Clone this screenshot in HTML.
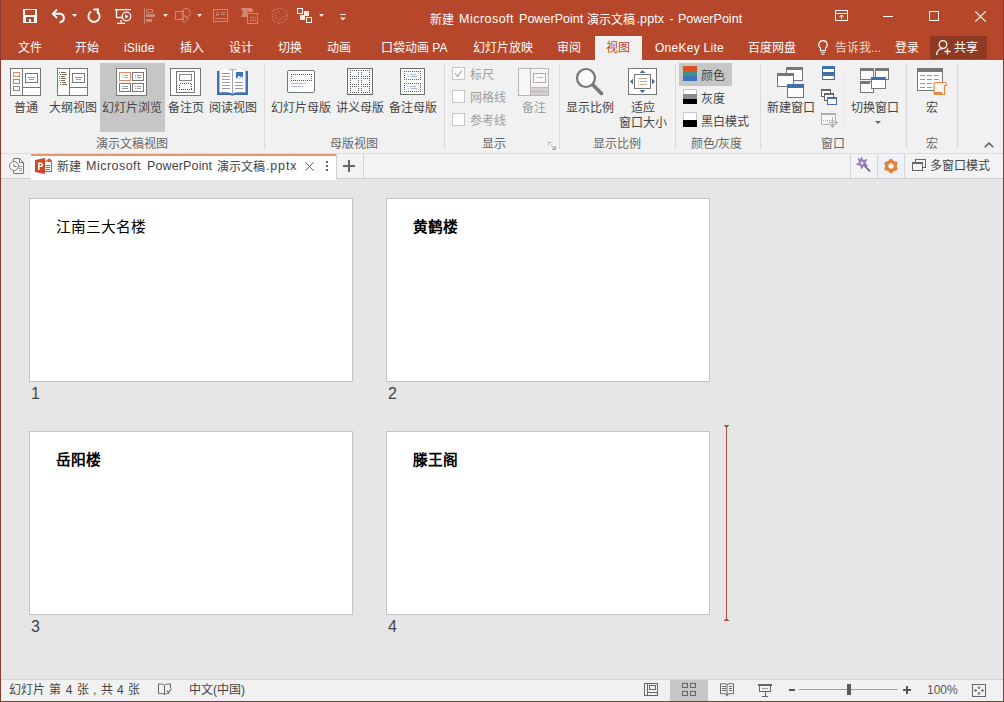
<!DOCTYPE html>
<html lang="zh-CN">
<head>
<meta charset="utf-8">
<title>PowerPoint</title>
<style>
*{box-sizing:border-box;margin:0;padding:0}
html,body{width:1004px;height:702px;overflow:hidden;background:#e6e6e6}
body{font-family:"Liberation Sans",sans-serif;font-size:12px;color:#444;position:relative}
.abs,.abs *{position:absolute}
.abs{left:0;top:0;width:1004px;height:702px}
.t{white-space:nowrap;line-height:14px;height:14px}
svg{position:absolute;overflow:visible}
/* header */
#hdr{left:0;top:0;width:1004px;height:60px;background:#b7472a}
#hdr .t{color:#fff}
.menu{top:41px;font-size:12px}
#title{top:11px;left:430px;font-size:13px;line-height:16px;height:16px;color:#fff}
#vtab{left:595px;top:36px;width:47px;height:24px;background:#f1f1f1}
#share{left:930px;top:36px;width:57px;height:23px;background:#8e3a22}
/* ribbon */
#rib{left:1px;top:60px;width:1002px;height:93px;background:#f1f1f1}
.sep{width:1px;background:#dadada;top:64px;height:85px}
.lbl{font-size:12px;color:#444}
.glbl{font-size:12px;color:#666;top:137px}
.sel{background:#c6c6c6}
.cb{width:13px;height:13px;border:1px solid #c8c8c8;background:#fdfdfd}
.dis{color:#9e9e9e}
/* doc tabs */
#tabs{left:1px;top:153px;width:1002px;height:26px;background:#f3f3f3;border-top:1px solid #dcdcdc;border-bottom:1px solid #d0d0d0}
#dtab{left:31px;top:154px;width:305px;height:26px;background:#fff;border-top:2px solid #e8946e}
.tsep{width:1px;background:#d4d4d4;top:154px;height:24px}
/* slides */
.slide{width:324px;height:184px;background:#fff;border:1px solid #c4c4c4}
.stxt{font-size:14.67px;line-height:18px;height:18px;color:#000;white-space:nowrap}
.num{font-size:16px;line-height:16px;height:16px;color:#444}
/* status */
#stat{left:1px;top:679px;width:1002px;height:22px;background:#f1f1f1;border-top:1px solid #d4d4d4}
.edge{background:#8a3a30}
</style>
</head>
<body>
<div class="abs">

<!-- ===== HEADER ===== -->
<div id="hdr"></div>
<div id="vtab"></div>
<div id="share"></div>
<div class="t" style="left:430px;top:13px;font-size:12px;letter-spacing:0px;color:#fff">新建</div>
<div class="t" style="left:459px;top:12px;font-size:12.5px;letter-spacing:0.48px;color:#fff">Microsoft</div>
<div class="t" style="left:519px;top:12px;font-size:12.5px;letter-spacing:0.04px;color:#fff">PowerPoint</div>
<div class="t" style="left:587px;top:13px;font-size:12px;letter-spacing:0px;color:#fff">演示文稿</div>
<div class="t" style="left:636.5px;top:12px;font-size:12.5px;letter-spacing:0.12px;color:#fff">.pptx</div>
<div class="t" style="left:669.5px;top:12px;font-size:12.5px;letter-spacing:0px;color:#fff">-</div>
<div class="t" style="left:678px;top:12px;font-size:12.5px;letter-spacing:0.02px;color:#fff">PowerPoint</div>

<div class="t menu" style="left:18px;color:#fff">文件</div>
<div class="t menu" style="left:75px;color:#fff">开始</div>
<div class="t menu" style="left:124px;color:#fff;letter-spacing:0.2px">iSlide</div>
<div class="t menu" style="left:180px;color:#fff">插入</div>
<div class="t menu" style="left:229px;color:#fff">设计</div>
<div class="t menu" style="left:278px;color:#fff">切换</div>
<div class="t menu" style="left:327px;color:#fff">动画</div>
<div class="t menu" style="left:381px;color:#fff">口袋动画 PA</div>
<div class="t menu" style="left:473px;color:#fff">幻灯片放映</div>
<div class="t menu" style="left:557px;color:#fff">审阅</div>
<div class="t menu" style="left:606px;color:#b7472a">视图</div>
<div class="t menu" style="left:655px;color:#fff;letter-spacing:0.27px">OneKey Lite</div>
<div class="t menu" style="left:748px;color:#fff">百度网盘</div>
<div class="t menu" style="left:835px;color:#f4dcd3">告诉我...</div>
<div class="t menu" style="left:895px;color:#fff">登录</div>
<div class="t menu" style="left:954px;color:#fff">共享</div>
<!-- save -->
<svg style="left:23px;top:9px" width="14" height="14" viewBox="0 0 14 14" shape-rendering="crispEdges">
<rect x="0" y="0" width="14" height="14" fill="#fff"/>
<rect x="2" y="1" width="10" height="5" fill="#b7472a"/>
<rect x="3" y="8" width="8" height="5" fill="#b7472a"/>
<rect x="6" y="10" width="2" height="3" fill="#fff"/>
</svg>
<!-- undo -->
<svg style="left:51px;top:8px" width="16" height="15" viewBox="0 0 16 15">
<path d="M2.200 5.800H9.500A4.300 4.300 0 0 1 9.500 14.200H8.500" fill="none" stroke="#fff" stroke-width="1.900"/>
<path d="M6 1.500L1.800 5.800L6 10" fill="none" stroke="#fff" stroke-width="1.900"/>
</svg>
<svg style="left:72px;top:14px" width="5" height="3" viewBox="0 0 5 3"><path d="M0 0h5l-2.500 3z" fill="#fff"/></svg>
<!-- redo -->
<svg style="left:87px;top:8px" width="14" height="15" viewBox="0 0 14 15">
<path d="M9.800 3.500A5.600 5.600 0 1 1 4.200 3.500" fill="none" stroke="#fff" stroke-width="1.900"/>
<path d="M6.500 1.500H11V6" fill="none" stroke="#fff" stroke-width="1.900"/>
</svg>
<!-- slideshow from start -->
<svg style="left:115px;top:9px" width="17" height="15" viewBox="0 0 17 15">
<path d="M0 0.700H16M1.500 0.700V8.500H7M6 11V13.500M2 14.300H10" fill="none" stroke="#fff" stroke-width="1.300"/>
<circle cx="11.500" cy="7.500" r="4.300" fill="#b7472a" stroke="#fff" stroke-width="1.200"/>
<path d="M10.200 5.300L13.600 7.500L10.200 9.700z" fill="#fff"/>
</svg>
<!-- dim: align -->
<svg style="left:144px;top:8px" width="12" height="16" viewBox="0 0 12 16" opacity="0.340" shape-rendering="crispEdges">
<path d="M0.500 0V16" stroke="#fff"/>
<rect x="2" y="1" width="6" height="3" fill="none" stroke="#fff"/>
<rect x="2" y="6" width="9" height="3" fill="#fff"/>
<rect x="2" y="11" width="6" height="3" fill="#fff"/>
</svg>
<svg style="left:163px;top:14px" width="5" height="3" viewBox="0 0 5 3"><path d="M0 0h5l-2.500 3z" fill="#fbe9dc"/></svg>
<!-- dim: shapes -->
<svg style="left:175px;top:8px" width="16" height="15" viewBox="0 0 16 15" opacity="0.340">
<rect x="0.500" y="3.500" width="8" height="8" fill="none" stroke="#fff"/>
<circle cx="11" cy="4.800" r="4.300" fill="none" stroke="#fff"/>
<path d="M9.500 7.500L13.500 11L9.500 14.500L5.500 11z" fill="none" stroke="#fff"/>
</svg>
<svg style="left:197px;top:14px" width="5" height="3" viewBox="0 0 5 3"><path d="M0 0h5l-2.500 3z" fill="#fbe9dc"/></svg>
<!-- dim: text box -->
<svg style="left:213px;top:9px" width="15" height="13" viewBox="0 0 15 13" opacity="0.340" shape-rendering="crispEdges">
<rect x="0.500" y="0.500" width="14" height="12" fill="none" stroke="#fff"/>
<path d="M3 6.500L4.500 3L6 6.500M8 3.500H12M8 5.500H12M2 9.500H13" fill="none" stroke="#fff"/>
</svg>
<!-- dim: flag + calendar -->
<svg style="left:241px;top:8px" width="17" height="16" viewBox="0 0 17 16" opacity="0.340">
<path d="M0 0H11L12.500 4H6V9H0L2 4.500z" fill="#fff"/>
<rect x="6.500" y="5.500" width="10" height="10" fill="#b7472a" stroke="#fff"/>
<path d="M9 9.500h1.500M11.500 9.500h1.500M9 12.500h1.500M11.500 12.500h1.500M14 9.500h1M14 12.500h1" stroke="#fff" stroke-width="1.300"/>
</svg>
<!-- dim: dotted circle -->
<svg style="left:271px;top:7px" width="17" height="17" viewBox="0 0 17 17" opacity="0.300">
<circle cx="8.500" cy="8.500" r="7.500" fill="none" stroke="#fff" stroke-width="1.300" stroke-dasharray="1.500 1.500"/>
<path d="M8.500 4.500A4 4 0 1 0 12.500 8.500" fill="none" stroke="#fff" stroke-dasharray="1.500 1.200"/>
</svg>
<!-- squares -->
<svg style="left:297px;top:8px" width="15" height="15" viewBox="0 0 15 15" shape-rendering="crispEdges">
<rect x="0.500" y="0.500" width="5" height="5" fill="none" stroke="#fff"/>
<rect x="7" y="3" width="5" height="5" fill="#fbe9dc"/>
<rect x="3" y="7" width="5" height="5" fill="#fbe9dc"/>
<rect x="9.500" y="9.500" width="5" height="5" fill="none" stroke="#fff"/>
</svg>
<svg style="left:319px;top:14px" width="5" height="3" viewBox="0 0 5 3"><path d="M0 0h5l-2.500 3z" fill="#fbe9dc"/></svg>
<!-- customize QAT -->
<svg style="left:340px;top:14px" width="6" height="7" viewBox="0 0 6 7"><path d="M0 0.500H6" stroke="#fbe9dc" stroke-width="1"/><path d="M0 3.500h6l-3 3z" fill="#fbe9dc"/></svg>

<!-- window controls -->
<svg style="left:835px;top:10px" width="13" height="11" viewBox="0 0 13 11" shape-rendering="crispEdges">
<rect x="0.500" y="0.500" width="12" height="10" fill="none" stroke="#fff"/>
<path d="M0.500 3.500H12.500" stroke="#fff"/>
<path d="M6.500 9V5" stroke="#fff"/><path d="M4.500 7L6.500 5L8.500 7" stroke="#fff" fill="none" shape-rendering="auto"/>
</svg>
<div style="left:883px;top:16px;width:10px;height:1px;background:#fff"></div>
<div style="left:929px;top:11px;width:10px;height:10px;border:1px solid #fff"></div>
<svg style="left:975px;top:11px" width="11" height="11" viewBox="0 0 11 11"><path d="M0.300 0.300L10.700 10.700M10.700 0.300L0.300 10.700" stroke="#fff" stroke-width="1.100"/></svg>

<!-- lightbulb -->
<svg style="left:818px;top:40px" width="10" height="15" viewBox="0 0 10 15">
<path d="M5 0.600A4.200 4.200 0 0 1 7.500 8.200V10.500H2.500V8.200A4.200 4.200 0 0 1 5 0.600z" fill="none" stroke="#fff" stroke-width="1.100"/>
<path d="M2.800 12.300H7.200M3.500 14.200H6.500" stroke="#fff" stroke-width="1.100"/>
</svg>
<!-- share person -->
<svg style="left:936px;top:40px" width="16" height="15" viewBox="0 0 16 15">
<circle cx="7" cy="4.500" r="3.800" fill="none" stroke="#fff" stroke-width="1.300"/>
<path d="M0.700 15C0.700 10.500 4 8.500 7 8.500" fill="none" stroke="#fff" stroke-width="1.300"/>
<path d="M11.500 8.500V14.500M8.500 11.500H14.500" stroke="#fff" stroke-width="1.300"/>
</svg>


<!-- ===== RIBBON ===== -->
<div id="rib"></div>
<!-- group 1 -->
<div class="sel" style="left:100px;top:63px;width:65px;height:69px"></div>
<!-- normal view icon -->
<svg style="left:10px;top:68px" width="31" height="28" viewBox="0 0 31 28" shape-rendering="crispEdges">
<rect x="0.5" y="0.5" width="30" height="27" fill="#fff" stroke="#777"/>
<path d="M12.5 0.5V27.5M12.5 19.5H30.5" stroke="#777" fill="none"/>
<rect x="15.5" y="5.5" width="12" height="9" fill="#fff" stroke="#777"/>
<path d="M18 9.5h7M19 11.5h5" stroke="#9a9a9a"/>
<rect x="3.5" y="4.5" width="6" height="4" fill="#fff" stroke="#d98b5f"/>
<rect x="3.5" y="11.5" width="6" height="4" fill="#fff" stroke="#8a8a8a"/>
<rect x="3.5" y="18.5" width="6" height="4" fill="#fff" stroke="#8a8a8a"/>
</svg>
<!-- outline view icon -->
<svg style="left:57px;top:68px" width="31" height="28" viewBox="0 0 31 28" shape-rendering="crispEdges">
<rect x="0.5" y="0.5" width="30" height="27" fill="#fff" stroke="#777"/>
<path d="M12.5 0.5V27.5M12.5 19.5H30.5" stroke="#777" fill="none"/>
<rect x="15.5" y="5.5" width="12" height="9" fill="#fff" stroke="#777"/>
<path d="M18 9.5h7M19 11.5h5" stroke="#9a9a9a"/>
<path d="M2 4.5h1M4 4.5h5M3 6.5h1M5 6.5h5M2 8.5h1M4 8.5h4M2 10.5h1M4 10.5h5M2 12.5h1M4 12.5h4M3 14.5h1M5 14.5h4M3 16.5h1M5 16.5h5" stroke="#7a6a60"/>
</svg>
<!-- slide sorter icon -->
<svg style="left:116px;top:68px" width="31" height="28" viewBox="0 0 31 28" shape-rendering="crispEdges">
<rect x="0.5" y="0.5" width="30" height="27" fill="#fff" stroke="#777"/>
<rect x="3.5" y="4.5" width="11" height="8" fill="#fff" stroke="#d98b5f"/>
<rect x="16.5" y="4.5" width="11" height="8" fill="#fff" stroke="#777"/>
<rect x="3.5" y="15.5" width="11" height="8" fill="#fff" stroke="#777"/>
<rect x="16.5" y="15.5" width="11" height="8" fill="#fff" stroke="#777"/>
<path d="M6 7.5h1M8 7.5h4M6 9.5h1M8 9.5h4" stroke="#d9a27f"/>
<path d="M19 7.5h1M21 7.5h4M19 9.5h1M21 9.5h4M6 18.5h6M6 20.5h6M19 18.5h1M21 18.5h4M19 20.5h1M21 20.5h4" stroke="#999"/>
</svg>
<!-- notes page icon -->
<svg style="left:170px;top:68px" width="31" height="28" viewBox="0 0 31 28" shape-rendering="crispEdges">
<rect x="0.5" y="0.5" width="30" height="27" fill="#fff" stroke="#777"/>
<rect x="6.5" y="3.5" width="18" height="21" fill="#fff" stroke="#777"/>
<rect x="9.5" y="6.5" width="12" height="6" fill="#fff" stroke="#8a8a8a"/>
<rect x="9.5" y="15.5" width="12" height="6" fill="none" stroke="#555" stroke-dasharray="1 1"/>
</svg>
<!-- reading view icon -->
<svg style="left:217px;top:68px" width="31" height="28" viewBox="0 0 31 28">
<path d="M0 3h2.5v-1.5h26v1.5H31v24H17.5l-2 .8-2-.8H0z" fill="#3f6fb5"/>
<path d="M2.5 1.5C7 0.6 12 0.8 15.5 2.6V25.6C12 24 7 24 2.5 24.6z" fill="#fff"/>
<path d="M28.500 1.5C24 0.6 19 0.8 15.500 2.600V25.600C19 24 24 24 28.500 24.600z" fill="#fff"/>
<path d="M15.500 2.600V25.600" stroke="#9aa5b5" stroke-width="1"/>
<g shape-rendering="crispEdges"><path d="M5 5.500h8M5 8.500h8M5 11.500h8M5 14.500h8M5 17.500h8M5 20.500h8M18 14.500h8M18 17.500h8M18 20.500h8" stroke="#9a9a9a"/>
<rect x="19" y="4" width="7" height="7" fill="#3f6fb5"/>
<path d="M19 11l3-3.500 1.500 1.500 1-1 1.500 2v1z" fill="#cfe0f5"/></g>
</svg>
<div class="t lbl" style="left:14px;top:101px">普通</div>
<div class="t lbl" style="left:49px;top:101px">大纲视图</div>
<div class="t lbl" style="left:102px;top:101px">幻灯片浏览</div>
<div class="t lbl" style="left:168px;top:101px">备注页</div>
<div class="t lbl" style="left:209px;top:101px">阅读视图</div>
<div class="t glbl" style="left:96px">演示文稿视图</div>
<div class="sep" style="left:264px"></div>

<!-- group 2 -->
<svg style="left:287px;top:70px" width="28" height="23" viewBox="0 0 28 23">
<rect x="0.5" y="0.5" width="27" height="22" rx="1.5" fill="#fdfdfd" stroke="#777" stroke-width="1"/>
<g shape-rendering="crispEdges"><path d="M4 4.5h21M4 10.5h21M4.5 4v7M24.5 4v7" fill="none" stroke="#555" stroke-dasharray="1 1"/>
<path d="M4 13.5h15M4 16.5h12" stroke="#a9c1e2"/></g>
</svg>
<svg style="left:347px;top:68px" width="26" height="27" viewBox="0 0 26 27" shape-rendering="crispEdges">
<rect x="0.5" y="0.5" width="25" height="26" fill="#fdfdfd" stroke="#6e6e6e"/>
<g fill="none" stroke="#555c68" stroke-dasharray="1 1">
<path d="M3 2.5h9M3 8.5h9M3.5 2v7M11.5 2v7M14 2.5h9M14 8.5h9M14.5 2v7M22.5 2v7"/>
<path d="M3 10.5h9M3 16.5h9M3.5 10v7M11.5 10v7M14 10.5h9M14 16.5h9M14.5 10v7M22.5 10v7"/>
<path d="M3 18.5h9M3 24.5h9M3.5 18v7M11.5 18v7M14 18.5h9M14 24.5h9M14.5 18v7M22.5 18v7"/>
</g></svg>
<svg style="left:400px;top:68px" width="25" height="27" viewBox="0 0 25 27" shape-rendering="crispEdges">
<rect x="0.5" y="0.5" width="24" height="26" fill="#fdfdfd" stroke="#6e6e6e"/>
<g fill="none" stroke="#555c68" stroke-dasharray="1 1">
<path d="M4 3.5h17M4 11.5h17M4.5 3v9M20.5 3v9M4 15.5h17M4 23.5h17M4.5 15v9M20.5 15v9"/></g>
<path d="M7 6.5h1M10 6.5h6M8 8.5h1M11 8.5h6M7 18.5h1M10 18.5h6M8 20.5h1M11 20.5h6" stroke="#a3b9d9"/>
</svg>
<div class="t lbl" style="left:271px;top:101px">幻灯片母版</div>
<div class="t lbl" style="left:336px;top:101px">讲义母版</div>
<div class="t lbl" style="left:389px;top:101px">备注母版</div>
<div class="t glbl" style="left:330px">母版视图</div>
<div class="sep" style="left:444px"></div>

<!-- group 3 -->
<div class="cb" style="left:452px;top:67px"></div>
<svg style="left:452px;top:67px" width="13" height="13" viewBox="0 0 13 13"><path d="M3 6.500l2.500 3L10 3.500" fill="none" stroke="#b4b4b4" stroke-width="1.300"/></svg>
<div class="cb" style="left:452px;top:90px"></div>
<div class="cb" style="left:452px;top:113px"></div>
<div class="t lbl dis" style="left:470px;top:68px">标尺</div>
<div class="t lbl dis" style="left:470px;top:91px">网格线</div>
<div class="t lbl dis" style="left:470px;top:114px">参考线</div>
<svg style="left:518px;top:68px" width="31" height="28" viewBox="0 0 31 28" shape-rendering="crispEdges">
<rect x="0.500" y="0.500" width="30" height="27" fill="#f7f5f7" stroke="#b9b4b9"/>
<path d="M12.500 0.500V27.500" stroke="#b9b4b9"/>
<rect x="13" y="19" width="17" height="8" fill="#d3cfd3"/>
<path d="M13 19.500H30M13 23.500H30" stroke="#bdb8bd"/>
<rect x="15.500" y="5.500" width="12" height="9" fill="#fbfafb" stroke="#b0abb0"/>
<path d="M18 9.500h1M20 9.500h5" stroke="#c0bbc0"/>
</svg>
<div class="t lbl dis" style="left:522px;top:101px">备注</div>
<div class="t glbl" style="left:482px">显示</div>
<svg style="left:548px;top:142px" width="8" height="8" viewBox="0 0 8 8"><path d="M0.500 3V0.500H3M7.500 4V7.500H4" fill="none" stroke="#aaa"/><path d="M3 3l4 4M7 4.500V7H4.500" fill="none" stroke="#aaa" stroke-width="1"/></svg>
<div class="sep" style="left:559px"></div>

<!-- group 4 -->
<svg style="left:575px;top:67px" width="30" height="29" viewBox="0 0 30 29">
<path d="M17.500 17.500l9 9" stroke="#777" stroke-width="3.600" stroke-linecap="round"/>
<circle cx="11" cy="11" r="9" fill="#fafafa" stroke="#777" stroke-width="2.200"/>
</svg>
<svg style="left:628px;top:68px" width="29" height="27" viewBox="0 0 29 27">
<g shape-rendering="crispEdges"><rect x="0.500" y="0.500" width="28" height="26" fill="#fff" stroke="#777"/>
<rect x="6.500" y="6.500" width="16" height="14" fill="#fff" stroke="#777"/>
<path d="M10 10.500h9M10 13.500h1M12 13.500h7M10 16.500h1M12 16.500h7" stroke="#c9a98c"/></g>
<path d="M14.500 2l3 3h-6zM14.500 25l3-3h-6zM2 13.500l3-3v6zM27 13.500l-3-3v6z" fill="#41719c"/>
</svg>
<div class="t lbl" style="left:566px;top:101px">显示比例</div>
<div class="t lbl" style="left:631px;top:101px">适应</div>
<div class="t lbl" style="left:619px;top:116px">窗口大小</div>
<div class="t glbl" style="left:593px">显示比例</div>
<div class="sep" style="left:675px"></div>

<!-- group 5 -->
<div class="sel" style="left:679px;top:63px;width:53px;height:23px"></div>
<div style="left:683px;top:66px;width:14px;height:5px;background:#dc4f27"></div>
<div style="left:683px;top:71px;width:14px;height:5px;background:#43908a"></div>
<div style="left:683px;top:76px;width:14px;height:5px;background:#3b76bd"></div>
<div style="left:683px;top:89px;width:14px;height:15px;background:#fff;border:1px solid #c8c8c8"></div>
<div style="left:683px;top:94px;width:14px;height:5px;background:#8c8c8c"></div>
<div style="left:683px;top:99px;width:14px;height:5px;background:#000"></div>
<div style="left:683px;top:112px;width:14px;height:15px;background:#fff;border:1px solid #c8c8c8"></div>
<div style="left:683px;top:120px;width:14px;height:7px;background:#000"></div>
<div class="t lbl" style="left:701px;top:69px">颜色</div>
<div class="t lbl" style="left:701px;top:92px">灰度</div>
<div class="t lbl" style="left:701px;top:115px">黑白模式</div>
<div class="t glbl" style="left:691px">颜色/灰度</div>
<div class="sep" style="left:760px"></div>

<!-- group 6 -->
<svg style="left:777px;top:67px" width="27" height="31" viewBox="0 0 27 31" shape-rendering="crispEdges">
<rect x="9.500" y="0.500" width="16" height="13" fill="#fdfdfd" stroke="#777"/><rect x="9" y="0" width="17" height="3" fill="#777"/>
<rect x="0.500" y="6.500" width="16" height="13" fill="#fdfdfd" stroke="#777"/><rect x="0" y="6" width="17" height="3" fill="#777"/>
<rect x="10.500" y="17.500" width="16" height="13" fill="#fdfdfd" stroke="#777"/><rect x="10" y="17" width="17" height="4" fill="#3f6fb5"/>
</svg>
<svg style="left:822px;top:66px" width="14" height="15" viewBox="0 0 14 15" shape-rendering="crispEdges">
<rect x="0.500" y="0.500" width="12" height="6" fill="#fdfdfd" stroke="#4a6b9a"/><rect x="0" y="0" width="13" height="3" fill="#3f6fb5"/>
<rect x="0.500" y="7.500" width="12" height="6" fill="#fdfdfd" stroke="#4a6b9a"/><rect x="0" y="7" width="13" height="3" fill="#3f6fb5"/>
</svg>
<svg style="left:821px;top:89px" width="17" height="16" viewBox="0 0 17 16" shape-rendering="crispEdges">
<rect x="0.500" y="0.500" width="9" height="7" fill="#fdfdfd" stroke="#666"/><rect x="0" y="0" width="10" height="2" fill="#666"/>
<rect x="3.500" y="4.500" width="9" height="7" fill="#fdfdfd" stroke="#666"/><rect x="3" y="4" width="10" height="2" fill="#666"/>
<rect x="6.500" y="8.500" width="9" height="7" fill="#fdfdfd" stroke="#4a6b9a"/><rect x="6" y="8" width="10" height="2" fill="#3f6fb5"/>
</svg>
<svg style="left:821px;top:113px" width="17" height="15" viewBox="0 0 17 15" shape-rendering="crispEdges">
<rect x="0.500" y="0.500" width="14" height="11" fill="#f7f7f7" stroke="#b0b0b0"/><rect x="0" y="0" width="15" height="2" fill="#b0b0b0"/>
<path d="M2 7.500h11" stroke="#b0b0b0" stroke-dasharray="1 1"/><path d="M11.500 4v10M8 9.500h8M10 12.500l1.500 1.500 1.500-1.500M14.500 8l1.500 1.500-1.500 1.500" stroke="#b0b0b0" fill="none"/>
</svg>
<div style="left:844px;top:72px;width:1px;height:54px;background:#e6e6e6"></div>
<svg style="left:860px;top:68px" width="29" height="25" viewBox="0 0 29 25" shape-rendering="crispEdges">
<rect x="0.500" y="0.500" width="13" height="11" fill="#fdfdfd" stroke="#777"/><rect x="0" y="0" width="14" height="3" fill="#777"/>
<rect x="15.500" y="0.500" width="13" height="11" fill="#fdfdfd" stroke="#777"/><rect x="15" y="0" width="14" height="3" fill="#777"/>
<rect x="0.500" y="13.500" width="13" height="11" fill="#fdfdfd" stroke="#777"/><rect x="0" y="13" width="10" height="3" fill="#777"/>
<rect x="11.500" y="9.500" width="14" height="11" fill="#fdfdfd" stroke="#777"/><rect x="11" y="9" width="15" height="3" fill="#3f6fb5"/>
</svg>
<svg style="left:875px;top:121px" width="6" height="3" viewBox="0 0 6 3"><path d="M0 0h6l-3 3z" fill="#666"/></svg>
<div class="t lbl" style="left:767px;top:101px">新建窗口</div>
<div class="t lbl" style="left:851px;top:101px">切换窗口</div>
<div class="t glbl" style="left:821px">窗口</div>
<div class="sep" style="left:906px"></div>

<!-- group 7 -->
<svg style="left:917px;top:68px" width="31" height="28" viewBox="0 0 31 28">
<g shape-rendering="crispEdges"><rect x="0.500" y="0.500" width="25" height="22" fill="#fdfdfd" stroke="#777"/><rect x="0" y="0" width="26" height="4" fill="#777"/>
<path d="M3 7.500h20M3 11.500h20M3 15.500h20M3 19.500h20" stroke="#999" stroke-dasharray="5 2"/></g>
<path d="M18.500 14.500h9.500q1.500 0 1.500 1.500v1.500h-2v9h-9q-1.500 0-1.500-1.500v-9q0-1.500 1.500-1.500z" fill="#fdf6f0" stroke="#e8894a" stroke-width="1.200"/>
<path d="M17 24h8v3h-6.500q-1.500 0-1.500-1.500z" fill="#e8894a"/>
</svg>
<div class="t lbl" style="left:926px;top:101px">宏</div>
<div class="t glbl" style="left:926px">宏</div>
<div class="sep" style="left:957px"></div>
<svg style="left:984px;top:142px" width="10" height="6" viewBox="0 0 10 6"><path d="M0.800 5.200l4.200-4 4.200 4" fill="none" stroke="#666" stroke-width="1.600"/></svg>


<!-- ===== DOC TABS ===== -->
<div id="tabs"></div>
<div id="dtab"></div>
<!-- history icon -->
<svg style="left:9px;top:158px" width="15" height="16" viewBox="0 0 15 16">
<path d="M4.500 3V0.500H10.500L14.500 4.500V15.500H4.500V13" fill="#f8f8f8" stroke="#777" stroke-width="1"/>
<path d="M10.500 0.500V4.500H14.500" fill="none" stroke="#777"/>
<path d="M10 8.500h3M10 10.500h3M10 12.500h3" stroke="#999"/>
<circle cx="5" cy="8" r="4.500" fill="#f8f8f8" stroke="#777"/>
<path d="M5 5.500V8.500H7.500" fill="none" stroke="#777"/>
</svg>
<!-- ppt icon -->
<svg style="left:35px;top:158px" width="17" height="16" viewBox="0 0 17 16">
<rect x="8" y="3" width="8.500" height="10.500" fill="#fff" stroke="#d35230" stroke-width="1"/>
<path d="M10.500 7.500h4.500M10.500 9.500h4.500M10.500 11.500h4.500" stroke="#d35230"/>
<circle cx="14.200" cy="2.300" r="1.900" fill="#d35230"/>
<path d="M0 2L10 0V16L0 14z" fill="#d24726"/>
<path d="M3 4.500h2.800a2.300 2.300 0 0 1 0 4.600H4.600V12H3z M4.600 5.900v1.800h1a0.900 0.900 0 0 0 0-1.800z" fill="#fff" fill-rule="evenodd"/>
</svg>
<div class="t" style="left:57px;top:160px;font-size:12px;letter-spacing:0px;color:#444">新建</div>
<div class="t" style="left:86px;top:159px;font-size:12.5px;letter-spacing:0.48px;color:#444">Microsoft</div>
<div class="t" style="left:147px;top:159px;font-size:12.5px;letter-spacing:0.13px;color:#444">PowerPoint</div>
<div class="t" style="left:217px;top:160px;font-size:12px;letter-spacing:0px;color:#444">演示文稿</div>
<div class="t" style="left:266px;top:159px;font-size:12.5px;letter-spacing:0.84px;color:#444">.pptx</div>

<svg style="left:305px;top:162px" width="9" height="9" viewBox="0 0 9 9"><path d="M0.300 0.300L8.700 8.700M8.700 0.300L0.300 8.700" stroke="#666" stroke-width="1"/></svg>
<div style="left:326px;top:161px;width:2px;height:2px;background:#666"></div>
<div style="left:326px;top:165px;width:2px;height:2px;background:#666"></div>
<div style="left:326px;top:169px;width:2px;height:2px;background:#666"></div>
<div style="left:336px;top:154px;width:1px;height:25px;background:#d0d0d0"></div>
<div style="left:343px;top:165px;width:12px;height:2px;background:#666"></div>
<div style="left:348px;top:160px;width:2px;height:12px;background:#666"></div>
<div class="tsep" style="left:363px"></div>
<div class="tsep" style="left:850px"></div>
<div class="tsep" style="left:877px"></div>
<div class="tsep" style="left:904px"></div>
<!-- wand -->
<svg style="left:856px;top:157px" width="15" height="15" viewBox="0 0 15 15">
<path d="M7 7L14 14.500" stroke="#6b5a86" stroke-width="1.800"/>
<path d="M5.500 0L7 3.600L10.800 2.500L9 6L11.500 9L7.600 8.600L5.500 12L4.500 8.200L0.500 7.500L3.600 5.200L2 1.500L5 3z" fill="#9a7fc0" stroke="#7a62a6" stroke-width="0.600"/>
<circle cx="6" cy="6" r="1.500" fill="#e8def5"/>
</svg>
<!-- gear -->
<div style="left:878px;top:154px;width:26px;height:24px;background:#eef2f8"></div>
<svg style="left:884px;top:159px" width="14" height="14" viewBox="0 0 14 14">
<circle cx="7" cy="7" r="4.300" fill="none" stroke="#e3803a" stroke-width="3.400"/>
<g fill="#e3803a"><circle cx="7" cy="1.600" r="1.900"/><circle cx="7" cy="12.400" r="1.900"/><circle cx="2.300" cy="4.300" r="1.900"/><circle cx="11.700" cy="4.300" r="1.900"/><circle cx="2.300" cy="9.700" r="1.900"/><circle cx="11.700" cy="9.700" r="1.900"/></g>
<circle cx="7" cy="7" r="2.500" fill="#fbf3ea"/>
</svg>
<!-- multi window -->
<svg style="left:912px;top:159px" width="14" height="12" viewBox="0 0 14 12" shape-rendering="crispEdges">
<path d="M3.500 3V0.500H13.500V8.500H10" fill="none" stroke="#666"/>
<rect x="0.500" y="3.500" width="10" height="8" fill="none" stroke="#666"/>
<path d="M0 4.500H11" stroke="#666"/>
</svg>
<div class="t" style="left:930px;top:159px;color:#444">多窗口模式</div>


<!-- ===== SLIDES ===== -->
<div class="slide" style="left:29px;top:198px"></div>
<div class="slide" style="left:386px;top:198px"></div>
<div class="slide" style="left:29px;top:431px"></div>
<div class="slide" style="left:386px;top:431px"></div>
<div class="stxt" style="left:56px;top:218px">江南三大名楼</div>
<div class="stxt" style="left:413px;top:218px;font-weight:bold">黄鹤楼</div>
<div class="stxt" style="left:56px;top:451px;font-weight:bold">岳阳楼</div>
<div class="stxt" style="left:413px;top:451px;font-weight:bold">滕王阁</div>
<div class="num" style="left:31px;top:386px">1</div>
<div class="num" style="left:388px;top:386px">2</div>
<div class="num" style="left:31px;top:619px">3</div>
<div class="num" style="left:388px;top:619px">4</div>
<!-- insertion marker -->
<div style="left:726px;top:425px;width:1px;height:196px;background:#a8503c"></div>
<div style="left:724px;top:425px;width:5px;height:1px;background:#a8503c"></div>
<div style="left:725px;top:426px;width:3px;height:1px;background:#a8503c"></div>
<div style="left:724px;top:620px;width:5px;height:1px;background:#a8503c"></div>
<div style="left:725px;top:619px;width:3px;height:1px;background:#a8503c"></div>

<!-- ===== STATUS BAR ===== -->
<div id="stat"></div>
<div class="t" style="left:9px;top:683px;word-spacing:1px">幻灯片 第 4 张 , 共 4 张</div>
<!-- spellcheck book -->
<svg style="left:158px;top:683px" width="14" height="13" viewBox="0 0 14 13">
<path d="M6.500 2.200V11.500M6.500 2.200C5 1 3 0.800 0.500 1V10.500C3 10.300 5 10.500 6.500 11.500C8 10.500 9.500 10.300 11 10.400" fill="none" stroke="#666" stroke-width="1"/>
<path d="M6.500 2.200C8 1 10 0.800 12.500 1V5" fill="none" stroke="#666"/>
<path d="M8.800 7.500L10.500 9.500L13.500 5.500" fill="none" stroke="#666" stroke-width="1.100"/>
</svg>
<div class="t" style="left:189px;top:683px">中文(中国)</div>
<!-- view buttons -->
<div class="sel" style="left:670px;top:680px;width:38px;height:21px"></div>
<svg style="left:644px;top:683px" width="14" height="13" viewBox="0 0 14 13" shape-rendering="crispEdges">
<rect x="0.500" y="0.500" width="13" height="12" fill="none" stroke="#666"/>
<path d="M3.500 0.500V12.500M3.500 9.500H13.500" stroke="#666"/>
<rect x="5.500" y="2.500" width="6" height="4" fill="none" stroke="#666"/>
</svg>
<svg style="left:682px;top:683px" width="14" height="13" viewBox="0 0 14 13" shape-rendering="crispEdges">
<rect x="0.500" y="0.500" width="5" height="4" fill="none" stroke="#666"/><rect x="8.500" y="0.500" width="5" height="4" fill="none" stroke="#666"/>
<rect x="0.500" y="8.500" width="5" height="4" fill="none" stroke="#666"/><rect x="8.500" y="8.500" width="5" height="4" fill="none" stroke="#666"/>
</svg>
<svg style="left:720px;top:683px" width="14" height="14" viewBox="0 0 14 14">
<path d="M7 1.500V12M7 1.500C5.500 0.600 3 0.500 0.500 0.800V10.800C3 10.500 5.500 10.700 7 11.500C8.500 10.700 11 10.500 13.500 10.800V0.800C11 0.500 8.500 0.600 7 1.500" fill="none" stroke="#666"/>
<path d="M2 3.500h3.500M2 5.500h3.500M2 7.500h3.500M8.500 3.500H12M8.500 5.500H12M8.500 7.500H12" stroke="#666" shape-rendering="crispEdges"/>
<path d="M5.500 11.500L7 13.500L8.500 11.500z" fill="#666"/>
</svg>
<svg style="left:758px;top:684px" width="14" height="13" viewBox="0 0 14 13" shape-rendering="crispEdges">
<path d="M0 1H14" stroke="#666" stroke-width="2"/>
<rect x="1.500" y="1.500" width="11" height="6" fill="none" stroke="#666"/>
<path d="M4 4.500h6" stroke="#999"/>
<path d="M7 8V12M4 12.500H10" stroke="#666"/>
</svg>
<!-- zoom slider -->
<div style="left:789px;top:689px;width:6px;height:2px;background:#555"></div>
<div style="left:799px;top:689px;width:99px;height:1px;background:#a0a0a0"></div>
<div style="left:847px;top:684px;width:4px;height:11px;background:#5a5a5a"></div>
<div style="left:903px;top:689px;width:8px;height:2px;background:#555"></div>
<div style="left:906px;top:686px;width:2px;height:8px;background:#555"></div>
<div class="t" style="left:927px;top:683px;color:#555">100%</div>
<svg style="left:972px;top:684px" width="14" height="13" viewBox="0 0 14 13">
<rect x="0.500" y="0.500" width="13" height="12" fill="none" stroke="#666" shape-rendering="crispEdges"/>
<path d="M7 2V4.500M7 11V8.500M2 6.500H4.500M12 6.500H9.500" stroke="#666"/>
<path d="M5.800 3.300L7 4.800L8.200 3.300M5.800 9.700L7 8.200L8.200 9.700M3.300 5.300L4.800 6.500L3.300 7.700M10.700 5.300L9.200 6.500L10.700 7.700" fill="none" stroke="#666" stroke-width="0.900"/>
</svg>


<!-- window edges -->
<div class="edge" style="left:0;top:0;width:1px;height:702px"></div>
<div class="edge" style="left:1003px;top:0;width:1px;height:702px"></div>
<div class="edge" style="left:0;top:701px;width:1004px;height:1px"></div>
</div>
</body>
</html>
